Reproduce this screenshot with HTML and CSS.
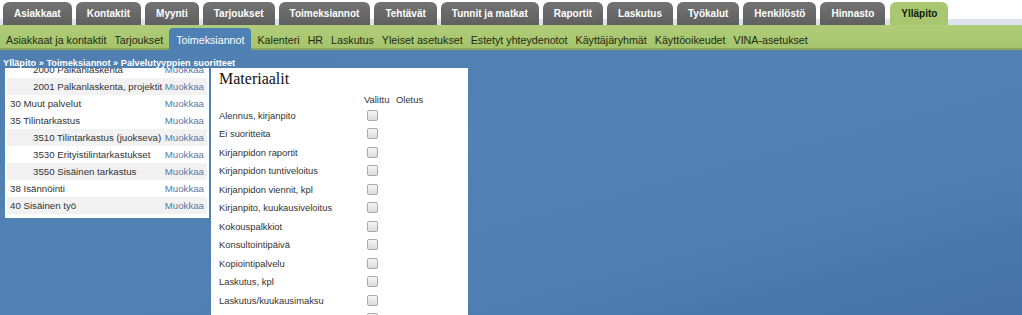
FILE: index.html
```html
<!DOCTYPE html>
<html lang="fi">
<head>
<meta charset="utf-8">
<title>Ylläpito – Palvelutyyppien suoritteet</title>
<link rel="stylesheet" href="styles.css">
</head>
<body>
<nav class="tabs">
  <a class="tab">Asiakkaat</a>
  <a class="tab">Kontaktit</a>
  <a class="tab">Myynti</a>
  <a class="tab">Tarjoukset</a>
  <a class="tab">Toimeksiannot</a>
  <a class="tab">Tehtävät</a>
  <a class="tab">Tunnit ja matkat</a>
  <a class="tab">Raportit</a>
  <a class="tab">Laskutus</a>
  <a class="tab">Työkalut</a>
  <a class="tab">Henkilöstö</a>
  <a class="tab">Hinnasto</a>
  <a class="tab active">Ylläpito</a>
</nav>
<nav class="subnav">
  <a class="sub">Asiakkaat ja kontaktit</a>
  <a class="sub">Tarjoukset</a>
  <a class="sub active">Toimeksiannot</a>
  <a class="sub">Kalenteri</a>
  <a class="sub">HR</a>
  <a class="sub">Laskutus</a>
  <a class="sub">Yleiset asetukset</a>
  <a class="sub">Estetyt yhteydenotot</a>
  <a class="sub">Käyttäjäryhmät</a>
  <a class="sub">Käyttöoikeudet</a>
  <a class="sub">VINA-asetukset</a>
</nav>
<div class="crumb">Ylläpito » Toimeksiannot » Palvelutyyppien suoritteet</div>
<main class="content">
  <section class="tree">
    <div class="tree-list">
      <div class="row child"><span class="name">2000 Palkanlaskenta</span><a class="edit">Muokkaa</a></div>
      <div class="row child alt"><span class="name">2001 Palkanlaskenta, projektit</span><a class="edit">Muokkaa</a></div>
      <div class="row"><span class="name">30 Muut palvelut</span><a class="edit">Muokkaa</a></div>
      <div class="row"><span class="name">35 Tilintarkastus</span><a class="edit">Muokkaa</a></div>
      <div class="row child alt"><span class="name">3510 Tilintarkastus (juokseva)</span><a class="edit">Muokkaa</a></div>
      <div class="row child"><span class="name">3530 Erityistilintarkastukset</span><a class="edit">Muokkaa</a></div>
      <div class="row child alt"><span class="name">3550 Sisäinen tarkastus</span><a class="edit">Muokkaa</a></div>
      <div class="row"><span class="name">38 Isännöinti</span><a class="edit">Muokkaa</a></div>
      <div class="row alt"><span class="name">40 Sisäinen työ</span><a class="edit">Muokkaa</a></div>
    </div>
  </section>
  <section class="mat">
    <h2 class="mat-title">Materiaalit</h2>
    <div class="mat-grid">
      <span class="head"></span><span class="head">Valittu</span><span class="head">Oletus</span>
      <span class="label">Alennus, kirjanpito</span><span class="cell"><input class="cb" type="checkbox"></span><span class="cell"></span>
      <span class="label">Ei suoritteita</span><span class="cell"><input class="cb" type="checkbox"></span><span class="cell"></span>
      <span class="label">Kirjanpidon raportit</span><span class="cell"><input class="cb" type="checkbox"></span><span class="cell"></span>
      <span class="label">Kirjanpidon tuntiveloitus</span><span class="cell"><input class="cb" type="checkbox"></span><span class="cell"></span>
      <span class="label">Kirjanpidon viennit, kpl</span><span class="cell"><input class="cb" type="checkbox"></span><span class="cell"></span>
      <span class="label">Kirjanpito, kuukausiveloitus</span><span class="cell"><input class="cb" type="checkbox"></span><span class="cell"></span>
      <span class="label">Kokouspalkkiot</span><span class="cell"><input class="cb" type="checkbox"></span><span class="cell"></span>
      <span class="label">Konsultointipäivä</span><span class="cell"><input class="cb" type="checkbox"></span><span class="cell"></span>
      <span class="label">Kopiointipalvelu</span><span class="cell"><input class="cb" type="checkbox"></span><span class="cell"></span>
      <span class="label">Laskutus, kpl</span><span class="cell"><input class="cb" type="checkbox"></span><span class="cell"></span>
      <span class="label">Laskutus/kuukausimaksu</span><span class="cell"><input class="cb" type="checkbox"></span><span class="cell"></span>
      <span class="label">Lomakkeet</span><span class="cell"><input class="cb" type="checkbox"></span><span class="cell"></span>
    </div>
  </section>
</main>
</body>
</html>
```
FILE: styles.css
```css
html, body {
  margin: 0;
  padding: 0;
}

body {
  width: 1022px;
  height: 315px;
  overflow: hidden;
  font-family: "Liberation Sans", Arial, sans-serif;
  background: linear-gradient(165deg, #4f7fb1 0%, #5282b4 45%, #507fb1 70%, #4672a6 100%);
}

a {
  text-decoration: none;
  cursor: pointer;
}

/* top tabs */
.tabs {
  display: flex;
  align-items: flex-end;
  gap: 4px;
  height: 25px;
  padding-left: 3px;
  background: linear-gradient(#ffffff 0, #ffffff 19px, #dfe2ef 19px, #dfe2ef 25px);
}

.tab {
  height: 23px;
  line-height: 23px;
  padding: 0 11px;
  border-radius: 6px 6px 0 0;
  background: linear-gradient(#737373, #5f5f5f);
  color: #ffffff;
  font-weight: bold;
  font-size: 10px;
  white-space: nowrap;
}

.tab.active {
  margin-left: 1px;
  background: #a9c770;
  color: #111a08;
}

/* sub navigation */
.subnav {
  display: flex;
  height: 25px;
  padding-left: 2px;
  background: linear-gradient(#b0cc79 0, #a6c46c 23px, #8aa65a 23px, #8aa65a 25px);
  font-size: 10.7px;
}

.sub {
  display: flex;
  align-items: center;
  padding: 5px 4px 0;
  color: #1d2a12;
  white-space: nowrap;
}

.sub.active {
  margin: 3px 2px 0;
  padding: 2px 7px 0;
  border-radius: 4px 4px 0 0;
  background: #4f80b3;
  color: #ffffff;
}

/* breadcrumb */
.crumb {
  box-sizing: border-box;
  height: 18px;
  padding: 8px 0 0 3px;
  line-height: 10px;
  font-size: 9.2px;
  font-weight: bold;
  color: #ffffff;
  white-space: nowrap;
}

/* content */
.content {
  display: flex;
  align-items: flex-start;
  gap: 2px;
  padding-left: 5px;
}

.tree {
  box-sizing: border-box;
  width: 204px;
  height: 150px;
  padding: 0 2px 4px;
  overflow: hidden;
  background: #ffffff;
}

.tree-list {
  margin-top: -7px;
}

.row {
  display: flex;
  justify-content: space-between;
  align-items: center;
  height: 17px;
  padding: 0 3px 0 3px;
  font-size: 9.7px;
  color: #333333;
  white-space: nowrap;
}

.row.alt {
  background: #f2f2f2;
}

.row.child .name {
  padding-left: 23px;
}

.edit {
  color: #5a78a6;
}

.mat {
  box-sizing: border-box;
  width: 257px;
  height: 260px;
  padding: 3px 0 0 8px;
  background: #ffffff;
  overflow: hidden;
}

.mat-title {
  margin: 0;
  font-family: "Liberation Serif", "Times New Roman", serif;
  font-weight: normal;
  font-size: 16px;
  line-height: 16px;
  color: #111111;
}

.mat-grid {
  display: grid;
  grid-template-columns: 145px 32px 32px;
  grid-template-rows: 13px;
  grid-auto-rows: 18.5px;
  margin-top: 6px;
  font-size: 9.4px;
  color: #333333;
}

.mat-grid .head {
  line-height: 13px;
}

.label, .cell {
  display: flex;
  align-items: center;
  white-space: nowrap;
}

.cb {
  appearance: none;
  -webkit-appearance: none;
  box-sizing: border-box;
  width: 11px;
  height: 11px;
  margin: 0 0 0 3px;
  border: 1px solid #a9a9a9;
  border-radius: 2px;
  background: linear-gradient(#f6f6f6, #dcdcdc);
}
```
